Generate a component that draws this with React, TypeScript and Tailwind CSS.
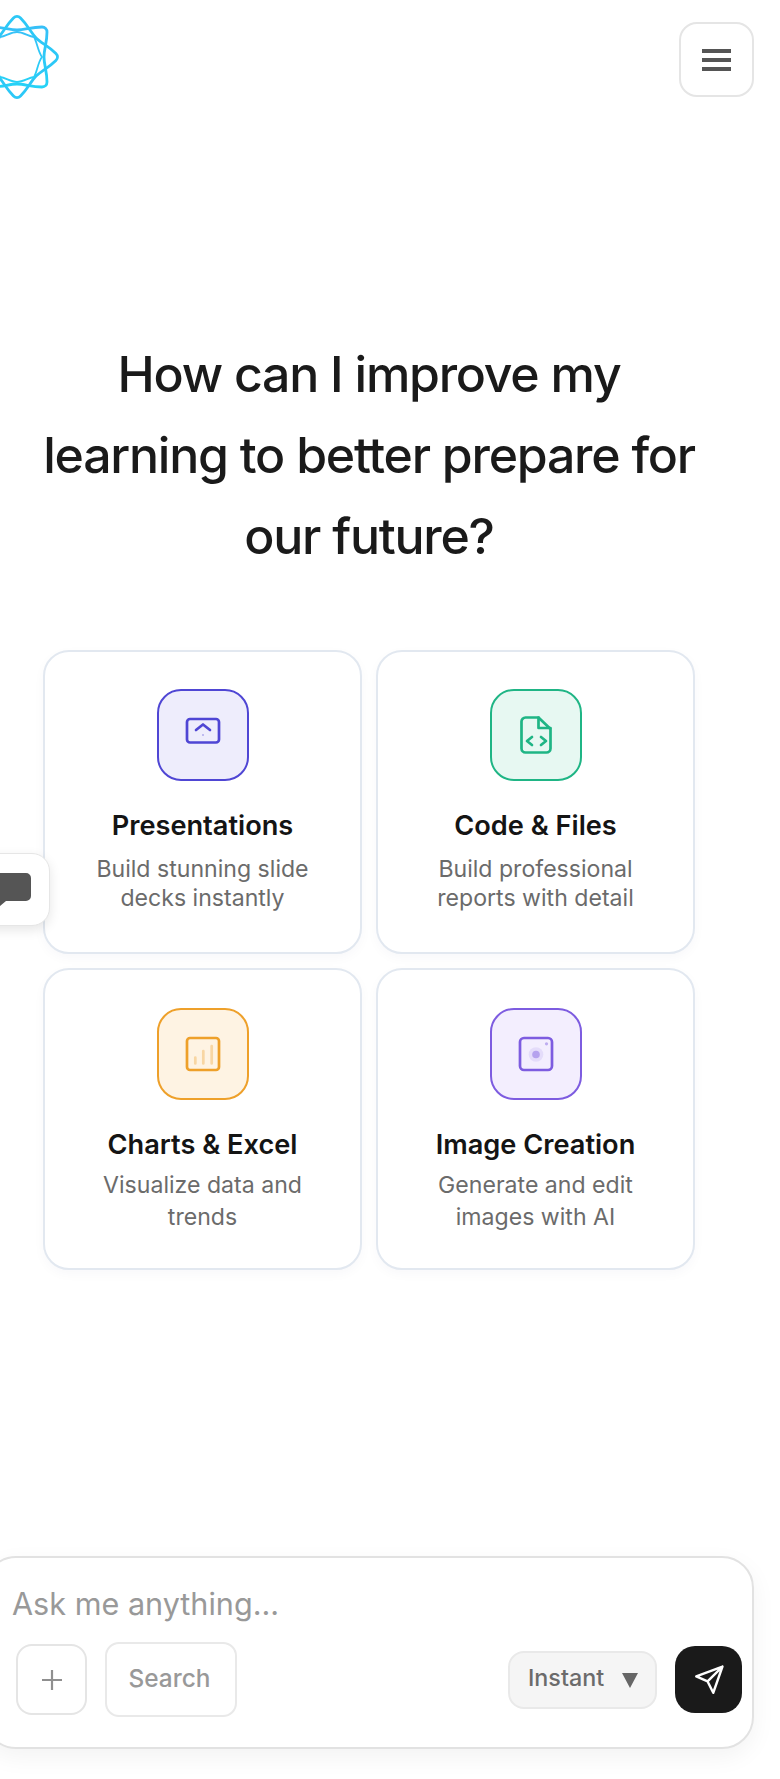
const CARDS = [
  {
    title: "Presentations",
    lines: ["Build stunning slide", "decks instantly"],
    box: "border-[#4f46d4] bg-[#eeedfc] text-[#4f46d4]",
    icon: "slides",
    text: "leading-[29px] mt-[12px]",
    card: "pt-[37px] h-[304px]",
  },
  {
    title: "Code & Files",
    lines: ["Build professional", "reports with detail"],
    box: "border-[#1fb585] bg-[#e7f8f2] text-[#1fb585]",
    icon: "code",
    text: "leading-[29px] mt-[12px]",
    card: "pt-[37px] h-[304px]",
  },
  {
    title: "Charts & Excel",
    lines: ["Visualize data and", "trends"],
    box: "border-[#eea02a] bg-[#fef3e3] text-[#eea02a]",
    icon: "chart",
    text: "leading-[32px] mt-[7px]",
    card: "pt-[38px] h-[302px]",
  },
  {
    title: "Image Creation",
    lines: ["Generate and edit", "images with AI"],
    box: "border-[#7d5ce0] bg-[#f3eefe] text-[#7d5ce0]",
    icon: "image",
    text: "leading-[32px] mt-[7px]",
    card: "pt-[38px] h-[302px]",
  },
];

function CardIcon({ name }: { name: string }) {
  return (
    <svg width="40" height="40" viewBox="0 0 40 40" fill="none" stroke="currentColor" strokeWidth="2.7" strokeLinecap="round" strokeLinejoin="round">
      {name === "slides" && (
        <>
          <rect x="4" y="4" width="32" height="23.5" rx="3" />
          <path d="M13 15l7-5.5 7 5.5" />
          <circle cx="20" cy="20" r="1" fill="currentColor" stroke="none" opacity="0.4" />
        </>
      )}
      {name === "code" && (
        <>
          <path d="M22.5 2.5H9.5a4 4 0 0 0-4 4v27a4 4 0 0 0 4 4h21a4 4 0 0 0 4-4V14z" />
          <path d="M22.5 2.5V13h12" />
          <path d="M16 22l-5 4 5 4M25 22l5 4-5 4" />
        </>
      )}
      {name === "chart" && (
        <>
          <rect x="4" y="4" width="32" height="32" rx="3" />
          <path d="M12.3 29.5V23.5M20.3 29.5V17M28.7 29.5V12" opacity="0.35" />
        </>
      )}
      {name === "image" && (
        <>
          <rect x="4" y="4" width="32" height="32" rx="4" />
          <circle cx="20" cy="20.5" r="7.3" fill="currentColor" stroke="none" opacity="0.12" />
          <circle cx="20" cy="20.5" r="3.8" fill="currentColor" stroke="none" opacity="0.45" />
          <circle cx="30.5" cy="9.8" r="1.6" fill="currentColor" stroke="none" opacity="0.45" />
        </>
      )}
    </svg>
  );
}

// rounded square with edges that dip in at the middle
const STAR =
  "M25-30C28-30 30-28 30-25C30-14 27-8 27 0C27 8 30 14 30 25C30 28 28 30 25 30C14 30 8 27 0 27C-8 27-14 30-25 30C-28 30-30 28-30 25C-30 14-27 8-27 0C-27-8-30-14-30-25C-30-28-28-30-25-30C-14-30-8-27 0-27C8-27 14-30 25-30Z";

// inner wavy ring
const RING =
  "M0-25C6-25 11-21 17-20C20-15 21-5 25 0C21 5 20 15 17 20C11 21 6 25 0 25C-6 25-11 21-17 20C-20 15-21 5-25 0C-21-5-20-15-17-20C-11-21-6-25 0-25Z";

function Logo() {
  return (
    <svg width="90" height="90" viewBox="-45 -45 90 90" fill="none" className="-ml-[28px] mt-[12px] shrink-0">
      <defs>
        <linearGradient id="logoGrad" gradientUnits="userSpaceOnUse" x1="0" y1="-42" x2="0" y2="42">
          <stop offset="0" stopColor="#3abcf8" />
          <stop offset="1" stopColor="#22d6f6" />
        </linearGradient>
      </defs>
      <path d={STAR} stroke="url(#logoGrad)" strokeWidth="2.8" />
      <g transform="rotate(45)">
        <path d={STAR} stroke="#2cc8f7" strokeWidth="2.8" />
      </g>
      <path d={RING} stroke="url(#logoGrad)" strokeWidth="1.8" />
    </svg>
  );
}

export default function App() {
  return (
    <div className="relative flex flex-col w-[780px] h-[1779px] overflow-hidden bg-white text-[#1a1a1a] font-['Inter',sans-serif]">
      {/* Header */}
      <header className="flex items-start justify-between pr-[26px]">
        <Logo />
        <button className="mt-[22px] flex h-[75px] w-[75px] items-center justify-center rounded-[18px] border-2 border-[#e5e5e5] bg-white">
          <svg width="29" height="24" viewBox="0 0 29 24" fill="#555555">
            <rect y="1" width="29" height="4" />
            <rect y="10" width="29" height="4" />
            <rect y="19" width="29" height="4" />
          </svg>
        </button>
      </header>

      {/* Heading */}
      <h1 className="mt-[232px] w-[738px] text-center text-[50px] leading-[81px] font-medium tracking-[-1.25px]">
        <span className="block whitespace-nowrap">How can I improve my</span>
        <span className="block whitespace-nowrap">learning to better prepare for</span>
        <span className="block whitespace-nowrap">our future?</span>
      </h1>

      {/* Cards */}
      <div className="mt-[73px] ml-[43px] grid w-[652px] grid-cols-2 gap-[14px]">
        {CARDS.map((c) => (
          <div
            key={c.title}
            className={`flex flex-col items-center rounded-[26px] border-2 border-[#e2e8f0] bg-white shadow-[0_4px_12px_rgba(30,40,80,0.03)] ${c.card}`}
          >
            <div className={`flex h-[92px] w-[92px] items-center justify-center rounded-[24px] border-2 ${c.box}`}>
              <CardIcon name={c.icon} />
            </div>
            <div className="mt-[28px] text-[27.2px] leading-[34px] font-semibold text-[#141414]">{c.title}</div>
            <div className={`text-center text-[23.1px] text-[#6b6b6b] ${c.text}`}>
              {c.lines.map((l) => (
                <div key={l}>{l}</div>
              ))}
            </div>
          </div>
        ))}
      </div>

      {/* Floating chat button, sits over the first card */}
      <button className="absolute left-[-24px] top-[853px] flex h-[73px] w-[74px] items-center justify-end rounded-[18px] border border-[#e6e6e6] bg-white pr-[18px] shadow-[0_4px_12px_rgba(0,0,0,0.1)]">
        <svg width="36" height="34" viewBox="0 0 36 34" fill="#555555">
          <path d="M5 0h26a5 5 0 0 1 5 5v18a5 5 0 0 1-5 5H11l-6 5v-5a5 5 0 0 1-5-5V5a5 5 0 0 1 5-5z" />
        </svg>
      </button>

      {/* Input */}
      <div className="mt-auto mb-[30px] -ml-[16px] w-[770px] rounded-[32px] border-2 border-[#e2e2e2] bg-white pt-[26px] pb-[30px] shadow-[0_8px_24px_rgba(0,0,0,0.05)]">
        <div className="pl-[26px] text-[30.6px] leading-[40px] text-[#999999]">Ask me anything...</div>
        <div className="mt-[18px] flex items-center justify-between pr-[10px] pl-[30px]">
          <div className="flex items-center gap-[18px]">
            <button className="flex h-[71px] w-[71px] items-center justify-center rounded-[16px] border-2 border-[#e5e5e5] bg-white">
              <svg width="22" height="22" viewBox="0 0 22 22" stroke="#8f8f8f" strokeWidth="2.2">
                <path d="M11 1v20M1 11h20" />
              </svg>
            </button>
            <button className="flex h-[75px] w-[132px] items-center justify-center rounded-[14px] border-2 border-[#e9e9e9] bg-white pr-[3px] pb-[3px] text-[24.4px] font-medium text-[#999999]">
              Search
            </button>
          </div>
          <div className="flex items-center gap-[18px]">
            <button className="flex h-[58px] w-[149px] items-center gap-[18px] rounded-[16px] border-2 border-[#e9e9e9] bg-[#f5f5f5] pb-[2px] pl-[18px] text-[23.3px] font-medium text-[#6b6b6b]">
              Instant
              <svg width="16" height="15" viewBox="0 0 16 15" fill="#666666" className="mt-[3px]">
                <path d="M0 0h16L8 15z" />
              </svg>
            </button>
            <button className="flex h-[67px] w-[67px] items-center justify-center rounded-[20px] bg-[#1a1a1a]">
              <svg width="34" height="34" viewBox="0 0 24 24" fill="none" stroke="#ffffff" strokeWidth="1.7" strokeLinejoin="round" strokeLinecap="round">
                <path d="M21.5 2.5 11 13M21.5 2.5 15 21 11 13 3 9.5z" />
              </svg>
            </button>
          </div>
        </div>
      </div>
    </div>
  );
}
